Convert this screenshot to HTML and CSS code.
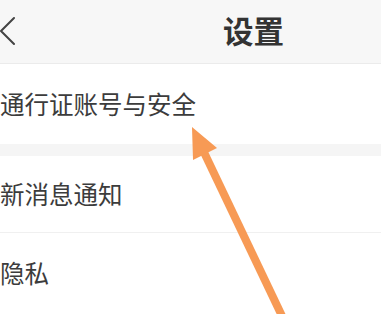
FILE: index.html
```html
<!DOCTYPE html>
<html lang="zh-CN">
<head>
<meta charset="utf-8">
<link rel="stylesheet" href="styles.css">
</head>
<body>
<div class="page">
  <header class="topbar">
    <svg class="back" width="18" height="30" viewBox="0 0 18 30"><polyline points="15,2 2,15 15,28" fill="none" stroke="#444" stroke-width="2" stroke-linecap="round" stroke-linejoin="round"/></svg>
    <h1 class="title">设置</h1>
  </header>
  <div class="row row-first">通行证账号与安全</div>
  <div class="gap"></div>
  <div class="row row-mid">新消息通知</div>
  <div class="row row-last">隐私</div>
  <svg class="arrow" width="381" height="314" viewBox="0 0 381 314">
    <line x1="282" y1="316" x2="201" y2="146" stroke="#f79a55" stroke-width="8" stroke-linecap="butt"/>
    <polygon points="192,127 217,148 193,160" fill="#f79a55"/>
  </svg>
</div>
</body>
</html>
```
FILE: styles.css
```css
* { box-sizing: border-box; }
html, body { margin: 0; padding: 0; background: #ffffff; }
body { font-family: "Noto Sans CJK SC", "Noto Sans", sans-serif; color: #3c3c3c; }
.page { position: relative; width: 381px; height: 314px; overflow: hidden; }
.topbar {
  height: 64px;
  background: #f7f7f7;
  border-bottom: 1px solid #ebebeb;
  display: flex;
  align-items: center;
}
.back { display: block; margin-left: -1px; margin-top: -2px; }
.title {
  margin: -2px 97px 0 auto;
  font-size: 30.5px;
  font-weight: 700;
  color: #333;
  line-height: 1;
}
.row {
  display: flex;
  align-items: center;
  font-size: 24.5px;
  line-height: 1;
  padding-left: 0;
  background: #fff;
}
.row-first { height: 80px; }
.gap { height: 12px; background: #f5f5f5; }
.row-mid { height: 77px; border-bottom: 1px solid #f0f0f0; }
.row-last { height: 80px; }
.arrow { position: absolute; left: 0; top: 0; pointer-events: none; }
```
